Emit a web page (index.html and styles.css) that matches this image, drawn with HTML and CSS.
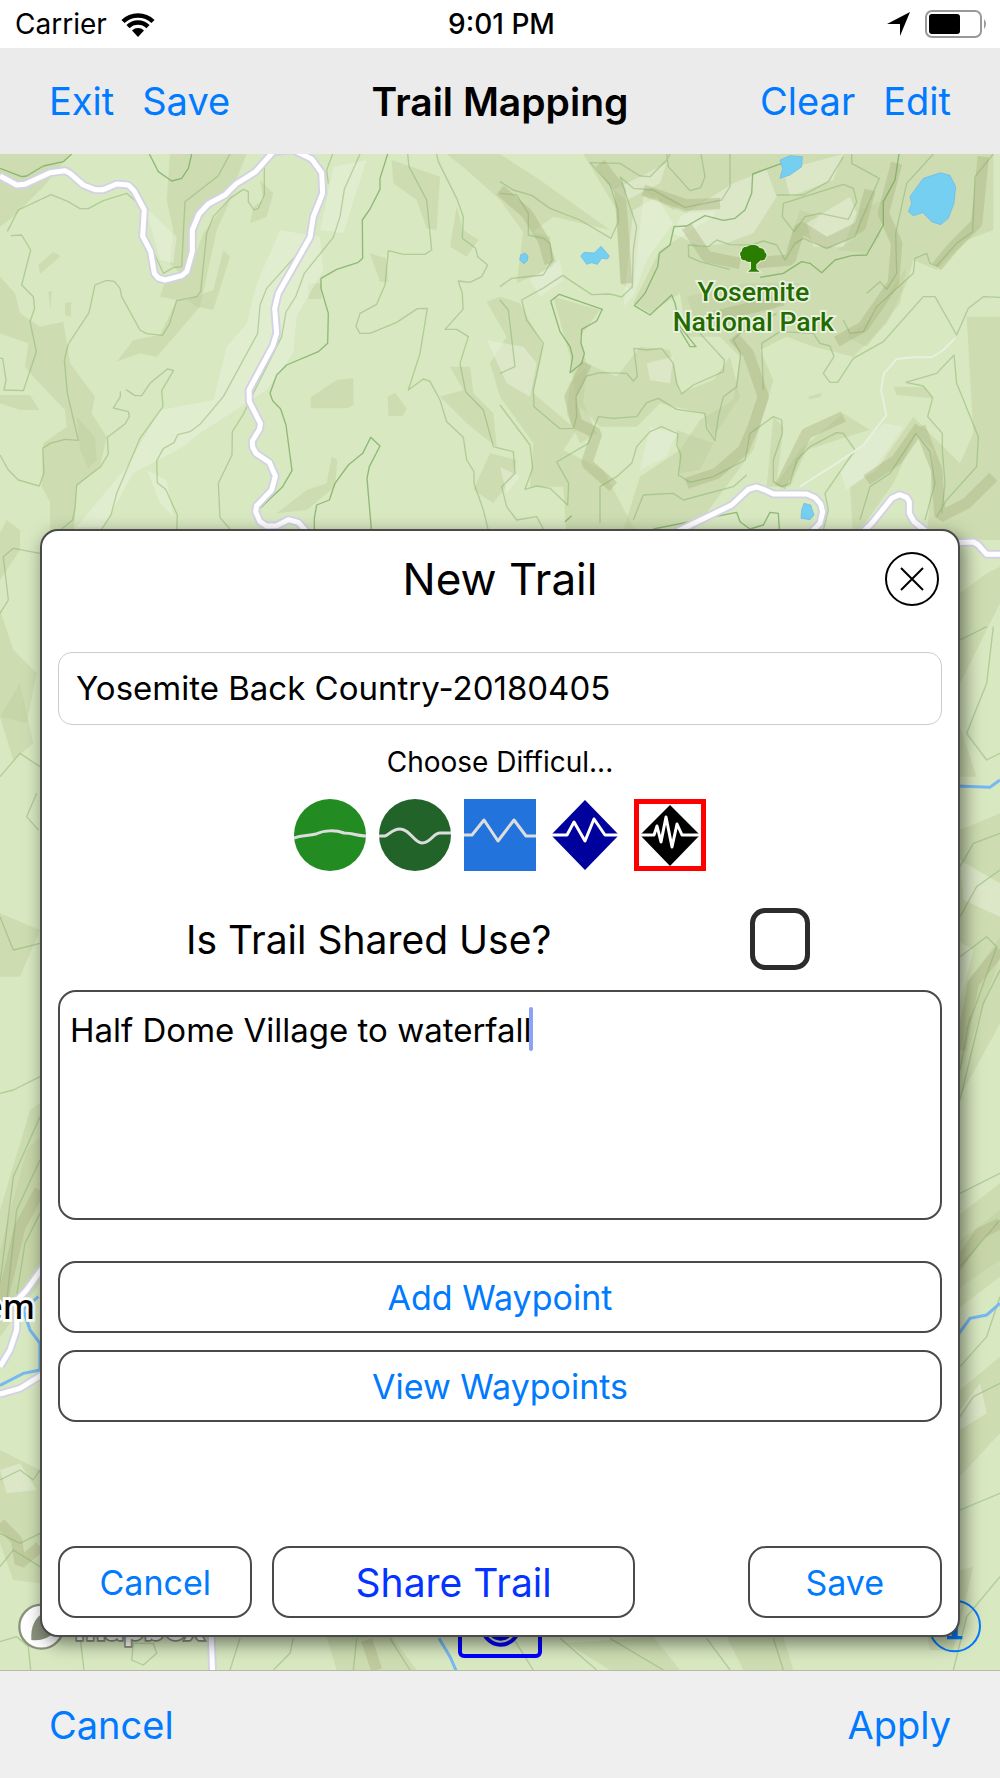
FILE: index.html
```html
<!DOCTYPE html>
<html lang="en">
<head>
    <meta charset="UTF-8">
    <meta name="viewport" content="width=device-width, initial-scale=1.0">
    <title>Trail Mapping</title>
    <link rel="stylesheet" href="styles.css">
</head>
<body>
    <div class="status-bar">
        <div class="status-left">
            <span>Carrier</span>
            <svg class="wifi-icon" viewBox="0 0 34 25">
                <path d="M2 9.500a21.500 21.500 0 0 1 30 0M7 14.700a14.300 14.300 0 0 1 20 0" fill="none" stroke="#000" stroke-width="4.500"/>
                <path d="M17 25l-6-6.500a8.500 8.500 0 0 1 12 0z"/>
            </svg>
        </div>
        <span class="status-time">9:01 PM</span>
        <div class="status-right">
            <svg class="location-icon" viewBox="0 0 24 24"><path d="M23 0L13 24V12H0z"/></svg>
            <svg class="battery-icon" viewBox="0 0 63 28">
                <rect x="1" y="1" width="55" height="26" rx="6" fill="#fff" stroke="#999" stroke-width="2"/>
                <rect x="4" y="4" width="31" height="20" rx="3"/>
                <path d="M59 9q4 5 0 10z" fill="#999"/>
            </svg>
        </div>
    </div>

    <header class="nav-bar">
        <div class="nav-group">
            <button type="button" class="bar-btn">Exit</button>
            <button type="button" class="bar-btn">Save</button>
        </div>
        <h1>Trail Mapping</h1>
        <div class="nav-group nav-right">
            <button type="button" class="bar-btn">Clear</button>
            <button type="button" class="bar-btn">Edit</button>
        </div>
    </header>

    <main class="map-stage">
        <svg class="map" viewBox="0 12 3000 4548" preserveAspectRatio="xMidYMin slice">
            <!-- hill shading, west -->
            <g class="shade">
                <path d="M0 12H210L130 110 40 200 0 230zM510 12H740L700 110 620 180 580 250 570 340 540 370 510 340 520 240 500 150zM700 130L650 240 620 380 600 470 540 540 470 620 420 610 350 635 400 570 480 555 530 450 480 440 500 380 570 360 610 250z"/>
                <path d="M0 380L45 430 60 490 120 530 190 515 210 640 285 740 275 790 320 860 300 950 230 1010 220 1170H150V1055L125 1010 130 880 200 830 195 780 100 680 75 650 85 580 0 550zM0 735L90 735 118 780 60 780 0 760zM115 345L160 305 182 318 120 372zM932 742L1010 690 1060 685V765L1040 775H932zM1163 740L1185 728 1220 775 1208 798H1165zM925 400H965V447H925zM1110 310L1158 325 1165 395 1140 395zM1175 30L1320 80 1310 240 1280 235 1250 150 1180 100z"/>
                <path d="M1370 170L1390 240 1435 270 1400 320 1350 290zM1350 650L1410 650 1420 730 1480 790 1490 890 1450 860 1400 820 1320 740 1390 720zM995 920L1012 930 1005 1010 920 1080 830 1090 920 1020 980 1000zM20 1110L60 1140 60 1200 0 1290V1150zM0 1380L40 1500 110 1570 80 1720 0 1700zM0 2290L120 2340 60 2480 0 2480zM780 90L820 130 800 200 750 220 760 170 790 150zM145 425L155 422 152 480zM195 460L214 455 212 500 195 495zM230 800L285 860 290 930 265 955 240 900zM560 450L640 420 670 300 690 320 640 480 590 470z"/>
            </g>
            <g class="light">
                <path d="M840 240L960 260 970 360 890 500 880 610 800 720 600 850 550 890 400 970 310 1130H230L380 950 480 780 640 750 680 590 740 520 770 400zM435 170L530 260 520 340 480 330zM1000 50L1100 30 1030 250 960 240zM440 960L500 990 520 1100 480 1060z"/>
            </g>

            <!-- hill shading, east -->
            <g transform="translate(1500 0)">
                <g class="shade">
                    <path d="M-160 12H0L120 90 330 240 160 200 80 260 0 150 -100 60zM250 12H700V180L560 190 430 140 400 420 360 400 350 180zM70 240L150 260 160 350 50 400zM700 12H1480V240L1400 270 1310 360 1240 330 1220 400 1160 520 1060 620 940 590 860 560 780 600 820 690 760 900 700 980 560 1170H360L420 980 540 900 600 810 700 750 720 620 660 560 560 560 540 430 450 490 400 460 480 300 640 200z"/>
                    <path d="M-40 455L0 440 60 460 130 590 100 730 230 840 190 900 310 960 420 1170H200L190 1010 90 1010 100 880 0 740 -30 640 20 560zM160 440L300 480 240 560 260 640 350 680 420 590 510 600 540 730 640 690 690 620 720 740 640 860 610 790 480 760 410 830 300 830 230 760 210 620zM530 840L640 880 600 960 540 970zM1400 500H1500V1170H1280L1300 900 1250 850 1180 1000 1060 1170 1050 1010 1130 960 1240 800 1380 940 1420 850zM1180 710L1270 712 1300 745 1190 735zM820 800L850 830 830 1000 900 900 1030 790 1110 840 1040 860 920 900 870 1010 800 1010zM-80 1020L-30 910 50 930 40 980 -20 1060zM925 740L967 728 960 742 928 748z"/>
                    <path d="M860 300L900 180 960 200 900 280zM1080 180L1150 150 1140 260 1100 310 1010 300 1070 260zM560 440L740 400 900 400 820 480 640 540 590 520zM400 100L470 120 540 160 520 180 440 130zM1040 560L1120 500 1180 410 1220 350 1200 460 1100 590zM210 700L260 650 250 760 290 850 240 880 200 790z"/>
                </g>
                <g class="light">
                    <path d="M540 200L700 100 800 60 830 140 760 250 680 280 600 290 520 250zM850 60L1030 12 1000 90 870 140zM920 220L1050 140 1070 190 1030 290 940 290zM90 390L180 330 190 390 120 440zM400 180L470 140 520 220 440 330 400 440 370 470zM-40 570L70 590 110 640 90 740 20 700zM0 950L60 980 20 1030zM340 120L460 60 500 40 480 100 380 150z"/>
                    <path d="M450 830L530 850 500 920 420 960zM1150 820L1210 830 1120 960 1040 1020 1020 960zM440 640L520 620 510 700 450 690z"/>
                </g>
                <g class="ridge">
                    <path d="M1190 40L1150 190 1190 280 1180 400 1090 530 1010 575M1450 20L1430 220 1360 290 1310 350M1110 120L1080 230 980 280 900 230 870 330 750 340M700 560L745 610 790 740 760 830 730 900 650 970 560 1000"/>
                    <path d="M260 640L210 740 230 820 290 850 260 940 340 1010M1030 800L920 850 880 930 840 1010M1260 830L1190 930 1100 990M1260 830L1310 960 1320 1100 1400 1060 1480 980M300 40L360 120 380 400M430 120L560 165 660 160M850 450L640 500M560 230L620 320 720 340M0 120L80 190 130 270 150 340"/>
                </g>
            </g>

            <!-- hill shading, beside the lower half of the map -->
            <g class="shade">
                <path d="M0 3180L90 2880 120 2860V3400L0 3560zM0 3900L120 3960V4300L40 4290 0 4180zM2880 1330L2960 1270 3000 1250V1360L2930 1500 2870 1620zM2870 1700L2930 1880H2870zM2880 2040L3000 1990V2420L2870 2800zM2870 3200L3000 3100V3380L2870 3480zM2880 3720L3000 3620V3850L2870 3990zM0 1700L60 1600 100 1780 40 1830z"/>
                <path d="M0 3300L80 3000 120 2960V3340L0 3520zM2870 2760L2900 2500 3000 2360V2620L2870 2860zM2870 3280L3000 3180V3330L2870 3420z"/>
                <path d="M980 4460L1160 4440 1250 4560H1010zM1700 4480L1960 4460 2040 4560H1830zM2180 4460H2350L2380 4560H2230zM2750 4300L2920 4250 2860 4500H2790z"/>
            </g>
            <g class="ridge">
                <path d="M0 3480L60 3230 120 3120M0 4120L50 4170 60 4240 120 4190M2880 2700L2920 2500 3000 2400M2870 3350L2940 3250 3000 3220M1100 4470L1130 4560"/>
            </g>
            <g class="light">
                <path d="M2880 2130L3000 2200V2300L2890 2250zM2870 2370L2920 2400 2880 2560zM2880 3780L2940 3700 2960 3790 2880 3840zM0 3960L60 3940 110 4020 20 4030z"/>
            </g>

            <!-- contour lines -->
            <g class="contour">
                <path d="M22 244L55 180 153 134 205 155 240 176 265 176 310 152 380 130 420 165M33 257L65 255 92 300 65 405 100 440 104 475 90 515 109 605 70 722 12 720 18 690 8 625H0M0 915L25 960 55 990 118 1008 132 968 128 895 150 880 195 868 235 871 202 730 193 630 205 582 267 488 285 405 320 391 343 394 360 415 365 440 420 540 440 551 487 556 508 523 530 452 590 440 602 425 620 250 640 200 690 145 730 118 745 125 745 155 762 180 775 175 793 135V50M378 719L405 737 425 737 450 700 502 657 521 661 485 722 489 770 420 865 350 1030 333 1095 303 1140M361 724V740L340 774 385 785 388 800 375 822 322 862 325 912 302 950 230 1005 225 1075 218 1110 185 1137M690 12L655 77 555 155 545 350 520 353 490 370 430 240"/>
                <path d="M885 320L800 415 780 465 773 550 670 740 600 823 570 845 533 854 522 878 490 896 470 932 472 998 497 1018 532 1095 530 1140M1080 12L1033 118 1020 200 1000 262 913 370 888 438 858 486 845 560 760 730 730 793 697 845 696 915 655 1000 660 1103 690 1137M1223 12L1227 50 1280 150 1295 300 1275 313H1210L1165 302 1155 405 1130 463 1080 490 1068 530 1080 550H1110L1190 517 1252 476 1282 475 1260 610 1225 720 1270 687 1290 694 1320 750 1340 815 1390 862 1400 930 1422 965V1000L1450 1080 1464 1137M1310 12L1315 35 1370 145 1390 200 1387 265 1427 295 1433 320 1463 345 1445 380 1410 397 1375 393 1387 430 1389 478 1335 538H1370L1405 560 1380 640 1397 725 1450 780 1480 890 1500 895M998 12L980 60 985 100"/>
            </g>
            <g class="contour" transform="translate(1500 0)">
                <path d="M0 95L40 120 95 136 150 175 240 210 333 265 355 215 354 180 330 105 270 38 360 40 420 78 450 80 500 30 510 12M360 80L410 230 400 300 397 410 365 441 330 432 275 434 188 376 132 413 65 450 80 510 130 580 100 720 102 770 180 836 220 835 230 800 228 740 260 678 300 668 380 670 400 693 412 680 402 595 440 600 485 595 520 640 530 700 545 732 580 705 670 665 673 630 600 550M360 80L400 115 460 120 500 143 555 172 665 150 690 110 690 12M0 130L50 135 85 190V255L130 265 150 280 157 330 130 375 35 385 0 410M500 12L505 50 570 122 602 113 615 80 603 12M170 936L265 880 295 800 340 805 410 800 440 758 475 745 530 778 615 790 620 835 645 872 655 800 670 740 710 710 722 610 700 570 720 550 830 490"/>
                <path d="M0 765L90 885 98 955 75 1018 110 1008 150 1015 203 1065 206 1000 170 936M300 1120V1010L350 980 396 938 410 890 450 845 485 830 534 852 530 885 543 915 535 975 570 997 640 980 735 930 750 850 820 800 845 810 847 850 820 930 820 995 845 1010 870 1000 890 930 930 890 1010 848 1030 850 1065 900 975 1030 985 1080 970 1140M790 720L785 580 840 545 940 550 960 580 990 588 1002 620 970 670 990 697H1013L1060 625 1150 575 1270 440H1305L1370 555 1405 475 1450 440 1500 442M830 135H910L985 95 1030 20M1055 12V40L1138 85 1080 220 1065 260 980 295 910 265 885 280 855 330 830 285 790 273 755 285 690 284 650 270 625 290 565 285 566 320 600 335 690 358M850 160L1030 103 1060 115 1070 155 1045 208 960 190 915 200 882 245 847 200zM1480 12L1425 80 1418 245 1370 280 1310 348 1290 340 1280 310 1245 325 1240 370 1130 470 1090 545 1050 550 1030 510M1300 12L1220 100 1187 250 1190 370 1160 418 1140 395 1100 430"/>
                <path d="M1217 697L1310 670 1362 615 1370 700 1435 860 1430 950 1340 1050 1310 1100M1217 697L1270 708 1298 743 1283 800 1327 850V900L1335 1000 1325 1090M1080 1110L1110 1010 1170 970 1248 850 1290 905 1305 1000 1275 1110M400 1110L430 1035 520 1030 550 1050 700 1010 740 975M0 895L40 905 45 970 5 1010 20 1070 50 1110 110 1100 130 1137M0 450L25 480 45 650 0 670"/>
            </g>
            <g class="contour">
                <path d="M0 1390L25 1350 10 1220 40 1195 120 1210M0 1880L60 1810 120 1850M0 2300L40 2400 120 2380M110 1930L80 2000 115 2040M0 2830L40 2820 120 2780M0 3400L40 3080 120 2900M15 3500L50 3180 120 3030M40 3500L75 3280 120 3190M0 3990L60 3960 100 3990 120 3960M0 4150L60 4180 120 4150M0 4250L40 4200 120 4250M2880 1470L2960 1430M2980 1430L2960 1600 2900 1750 2960 1830 3000 1810M2880 2150L2920 2080 3000 2050M2880 2300L2930 2210 3000 2160M2880 2420L2960 2360 2990 2390 2900 2640M2880 2850L2950 2560 3000 2460M2880 2760L2910 2600M2880 3130L3000 3070M2880 3350L3000 3210M2880 3650L2960 3560 3000 3440M2880 3800L2920 3740 3000 3700M2880 4080L3000 4030M2860 4560L2900 4400 3000 4280"/>
                <path d="M0 4475L50 4460 85 4490 92 4560M240 4460L252 4560M400 4480L460 4480 470 4510 430 4545 395 4530zM720 4465L690 4560M880 4465L870 4510 820 4560M1070 4465L1060 4560M1170 4465L1230 4560M1540 4465L1600 4560M1680 4465L1790 4560M1830 4465L1990 4560M2120 4465L2190 4560M2320 4465L2350 4560"/>
            </g>
            <g class="contour strong">
                <path d="M0 55L65 80 80 78 130 48 190 35 215 12M448 12L475 65 515 93 545 85 565 55 575 12M1163 12L1140 85V118L1110 177 1087 210 1088 325 1075 337 1010 358 963 385V415L985 490 983 580 955 605 860 645 830 675 810 730 818 752 842 777 858 825 876 962 848 1010 780 1075M943 1137V1105L950 1065 988 1050 1005 1000 1045 945 1088 910 1112 862 1140 888 1108 950 1101 985 1114 1137"/>
            </g>
            <g class="contour strong" transform="translate(1500 0)">
                <path d="M1197 12L1185 90 1150 155V225L1100 315 1055 317 1005 330 965 368 930 340 905 335 850 370 780 382M845 40L758 72 755 130 735 180 705 205 670 211 615 197 560 228 522 230 510 285 478 310 473 350 435 430 403 467 450 495 515 435 525 460 540 530 588 590 570 590 540 540M210 668L218 620 210 590 180 545 152 453 178 433 307 478 290 513 245 538 243 580 253 610 245 640zM460 1137L710 1087 720 1115 750 1137 790 1125 810 1087 835 1090 838 1137M195 1115L215 1097"/>
            </g>

            <!-- water -->
            <g class="lake" transform="translate(1500 0)">
                <path d="M1270 85L1322 68 1350 76 1367 110 1362 160 1345 205 1322 224 1295 215 1268 188 1240 197 1225 185 1235 160 1230 140zM840 30L870 17 907 20 905 50 870 75 840 85 848 55zM242 318L252 307 283 309 303 289 328 318 322 327 305 325 292 343 275 338 260 343zM62 315L75 309 84 317 82 332 72 341 59 330zM912 1060L932 1065 942 1095 930 1109 903 1105 905 1080z"/>
            </g>
            <path class="river" d="M2870 1908L2970 1912 3000 1890M2870 3560L2910 3505 2960 3495 3000 3460M0 3706L70 3670 120 3660V3580L90 3540 70 3480 115 3440M1317 4465L1350 4520 1372 4570"/>

            <!-- roads -->
            <path class="trail" d="M2865 565L2830 600 2795 622H2740L2690 627 2652 670 2643 720 2659 795 2590 885 2510 940 2470 965 2400 1010"/>
            <g class="road-edge">
                <path id="roads" d="M0 78L50 105 75 103 150 68 195 62 210 70 250 105 285 119 310 119 350 102 385 105 402 122 433 180 428 258 452 305 463 370 475 384 495 390 545 377 560 365 577 305V240L597 192 625 162 675 135 708 102 767 65 820 5 880 0 935 27 965 68 968 130 940 200 930 262 835 430 824 475 830 550 818 588 747 720 748 755 781 820 779 837 757 873 758 892 768 910 808 937 826 978 815 1020 770 1067 767 1085 780 1115 800 1128 830 1127 865 1109 895 1117 920 1145M2030 1145L2195 1065 2245 1018 2270 1011 2290 1018 2320 1032H2420L2445 1043 2462 1062 2468 1085 2460 1120 2435 1145M2590 1145L2615 1120 2675 1045 2698 1034 2720 1042 2728 1055V1090L2742 1115 2780 1145M2870 1178L2920 1176 2935 1185 2960 1213H3000M0 3732L60 3715 125 3675M0 3650L30 3600 50 3540 52 3450 80 3420 130 3350M633 4440L638 4570"/>
            </g>
            <use href="#roads" class="road-fill"/>

            <!-- labels and controls -->
            <g transform="translate(2220 285)" fill="#2b7d00" stroke="#edf3e2" stroke-width="5" paint-order="stroke">
                <path d="M41 0c10 0 16 5 18 9 10 0 16 6 15 13 7 4 7 12 2 17 0 6-8 9-14 7l-13 12v14l10 8H24l9-8V50c-8 2-14 0-17-4-8 1-15-5-13-12-5-6-3-13 3-16-1-8 6-14 15-13 5-4 12-5 20-5z"/>
            </g>
            <text class="park-name" x="2260" y="452">Yosemite</text>
            <text class="park-name" x="2260" y="543">National Park</text>
            <text class="town-name" x="105" y="3507">em</text>

            <circle cx="124" cy="4430" r="66" fill="#fff" stroke="#8a917c" stroke-width="7"/>
            <path d="M94 4470q-4-60 40-84 40 20 30 60-30 30-70 24z" fill="#88907a"/>
            <text class="brand-name" x="225" y="4470">mapbox</text>
            <rect x="1380" y="4290" width="240" height="228" rx="12" class="locate"/>
            <circle cx="1502" cy="4430" r="54" class="locate"/>
            <circle cx="1502" cy="4430" r="36" class="locate"/>
            <circle cx="2864" cy="4428" r="76" fill="none" stroke="#007aff" stroke-width="6"/>
            <path d="M2845 4410h28v48h14v10h-46v-10h14v-38h-10z" fill="#007aff"/>
        </svg>

        <form class="trail-card">
            <div class="card-header">
                <h2>New Trail</h2>
                <button type="button" class="close-btn" aria-label="Close">
                    <svg viewBox="0 0 54 54" fill="none" stroke="#000" stroke-width="2">
                        <circle cx="27" cy="27" r="26"/>
                        <path d="M16 16l22 22M38 16L16 38"/>
                    </svg>
                </button>
            </div>

            <input type="text" class="trail-name" aria-label="Trail name" value="Yosemite Back Country-20180405">

            <fieldset class="difficulty">
                <legend>Choose Difficul...</legend>
                <div class="difficulty-list">
                    <label>
                        <input type="radio" name="difficulty" value="1" aria-label="Easiest">
                        <svg viewBox="0 0 72 72">
                            <circle cx="36" cy="36" r="36" fill="#228b22"/>
                            <path d="M0 39C7 36 14 37 22 35c8-4 20-4 28-1 8 0 14 3 22 3" stroke="#ddd"/>
                        </svg>
                    </label>
                    <label>
                        <input type="radio" name="difficulty" value="2" aria-label="Easy">
                        <svg viewBox="0 0 72 72">
                            <circle cx="36" cy="36" r="36" fill="#226329"/>
                            <path d="M0 37h6c4-1 7-7 15-7 10 0 14 14 22 14 9 0 11-10 18-10h11" stroke="#ddd"/>
                        </svg>
                    </label>
                    <label>
                        <input type="radio" name="difficulty" value="3" aria-label="Intermediate">
                        <svg viewBox="0 0 72 72">
                            <path d="M0 0h72v72H0z" fill="#2274dc" stroke="none"/>
                            <path d="M0 36h8l12-15 14 21 16-21 12 16h10" stroke="#ddd"/>
                        </svg>
                    </label>
                    <label>
                        <input type="radio" name="difficulty" value="4" aria-label="Hard">
                        <svg viewBox="0 0 72 72">
                            <path d="M36 1l34 35-34 35L2 36z" fill="#00009c" stroke="none"/>
                            <path d="M2 36h16l7-13 11 19 9-22 11 16h14" stroke="#fff"/>
                        </svg>
                    </label>
                    <label>
                        <input type="radio" name="difficulty" value="5" aria-label="Extreme" checked>
                        <svg viewBox="0 0 72 72">
                            <path d="M36 6l30 30-30 31L6 36z" fill="#000" stroke="none"/>
                            <path d="M6 36h14l3-9 4 16 5-25 6 30 5-23 5 11h18" stroke="#fff"/>
                        </svg>
                    </label>
                </div>
            </fieldset>

            <div class="shared-row">
                <label for="sharedUse">Is Trail Shared Use?</label>
                <input type="checkbox" id="sharedUse">
            </div>

            <div class="notes-box">
                <textarea class="notes" aria-label="Trail description">Half Dome Village to waterfall</textarea>
                <span class="text-cursor"></span>
            </div>

            <div class="waypoint-actions">
                <button type="button" class="card-btn">Add Waypoint</button>
                <button type="button" class="card-btn">View Waypoints</button>
            </div>

            <div class="card-actions">
                <button type="button" class="card-btn small">Cancel</button>
                <button type="button" class="card-btn share">Share Trail</button>
                <button type="submit" class="card-btn small save">Save</button>
            </div>
        </form>
    </main>

    <footer class="tool-bar">
        <button type="button" class="bar-btn">Cancel</button>
        <button type="button" class="bar-btn">Apply</button>
    </footer>
</body>
</html>
```
FILE: styles.css
```css
:root {
    --tint: #007aff;
    --line: #4a4a4a;
}

* {
    box-sizing: border-box;
    margin: 0;
    padding: 0;
}

body {
    font-family: Inter, 'Liberation Sans', sans-serif;
    color: #000;
    background: #fff;
    min-height: 100vh;
    display: flex;
    flex-direction: column;
}

button {
    font-family: inherit;
    background: none;
    border: none;
    cursor: pointer;
}

svg {
    display: block;
}

/* status bar */
.status-bar {
    display: grid;
    grid-template-columns: 1fr auto 1fr;
    align-items: center;
    height: 48px;
    padding: 0 12px 0 15px;
    font-size: 28px;
}

.status-left,
.status-right {
    display: flex;
    align-items: center;
    gap: 14px;
}

.status-right {
    justify-content: flex-end;
}

.status-time {
    font-weight: 500;
}

.wifi-icon {
    width: 34px;
    height: 25px;
}

.location-icon {
    width: 24px;
    height: 24px;
}

.battery-icon {
    width: 63px;
    height: 28px;
}

/* navigation bar */
.nav-bar {
    display: grid;
    grid-template-columns: 1fr auto 1fr;
    align-items: center;
    height: 106px;
    padding: 0 49px;
    background: #ebebeb;
}

.nav-bar h1 {
    font-size: 39px;
    font-weight: 600;
}

.nav-group {
    display: flex;
    gap: 28px;
}

.nav-right {
    justify-content: flex-end;
}

.bar-btn {
    color: var(--tint);
    font-size: 38px;
}

/* map */
.map-stage {
    position: relative;
    flex: 1;
    padding: 375px 40px 33px;
    background: #d8e8c0;
    overflow: hidden;
}

.map {
    position: absolute;
    top: 0;
    left: 0;
    width: 100%;
    height: 100%;
}

.shade {
    fill: #bfcc9c;
    fill-opacity: 0.4;
}

.light {
    fill: #e9f1de;
    opacity: 0.5;
}

.ridge {
    fill: none;
    stroke: #a9b27f;
    stroke-width: 34;
    stroke-linejoin: bevel;
    opacity: 0.4;
}

.contour {
    fill: none;
    stroke: #7fae66;
    stroke-width: 4;
    stroke-linejoin: round;
    opacity: 0.45;
}

.contour.strong {
    stroke: #68a050;
    opacity: 0.65;
}

.lake {
    fill: #75cff0;
    stroke: #6db4ec;
    stroke-width: 2;
}

.river {
    fill: none;
    stroke: #75b8f2;
    stroke-width: 9;
}

.trail {
    fill: none;
    stroke: #e8f0df;
    stroke-width: 6;
}

.road-edge,
.road-fill {
    fill: none;
    stroke: #d2d2e4;
    stroke-width: 26;
    stroke-linejoin: round;
}

.road-fill {
    stroke: #fff;
    stroke-width: 15;
}

.park-name {
    font-family: Roboto, sans-serif;
    font-size: 80px;
    font-weight: 500;
    text-anchor: middle;
    fill: #226b00;
    stroke: #edf3e2;
    stroke-width: 10;
    paint-order: stroke;
}

.town-name {
    font-family: 'Noto Sans', sans-serif;
    font-size: 102px;
    font-weight: 500;
    text-anchor: end;
    stroke: #fff;
    stroke-width: 16;
    paint-order: stroke;
}

.brand-name {
    font-family: Lato, sans-serif;
    font-size: 108px;
    font-weight: 900;
    fill: #fff;
    stroke: #8a917c;
    stroke-width: 10;
    paint-order: stroke;
}

.locate {
    fill: none;
    stroke: #0000ff;
    stroke-width: 12;
}

/* new trail card */
.trail-card {
    position: relative;
    padding: 0 16px 17px;
    background: #fff;
    border: 2px solid var(--line);
    border-radius: 18px;
    box-shadow: 4px 6px 18px rgba(0, 0, 0, 0.5);
}

.card-header {
    display: grid;
    grid-template-columns: 54px 1fr 54px;
    align-items: center;
    height: 96px;
    margin-bottom: 25px;
    padding: 0 3px;
}

.card-header h2 {
    grid-column: 2;
    font-size: 44px;
    font-weight: 400;
    text-align: center;
}

.close-btn,
.close-btn svg {
    width: 54px;
    height: 54px;
}

.trail-name {
    display: block;
    width: 100%;
    height: 73px;
    padding: 0 17px 2px;
    border: 1px solid #ccc;
    border-radius: 14px;
    font: 400 33px Inter, sans-serif;
    color: #000;
    outline: none;
}

.difficulty {
    margin-top: 19px;
    border: none;
}

.difficulty legend {
    width: 100%;
    margin-bottom: 19px;
    font-size: 28px;
    line-height: 36px;
    text-align: center;
}

.difficulty-list {
    display: flex;
    justify-content: center;
    gap: 13px;
}

.difficulty-list input {
    position: absolute;
    appearance: none;
}

.difficulty-list svg {
    width: 72px;
    height: 72px;
    fill: none;
    stroke-width: 3;
    stroke-linejoin: round;
}

.difficulty-list input:checked + svg {
    outline: 5px solid #ff0000;
    outline-offset: -5px;
}

.shared-row {
    display: flex;
    align-items: center;
    justify-content: space-between;
    margin-top: 37px;
    padding: 0 132px 0 128px;
    font-size: 39px;
}

.shared-row input {
    appearance: none;
    width: 60px;
    height: 62px;
    border: 5px solid #2c2c2c;
    border-radius: 15px;
}

.notes-box {
    position: relative;
    margin: 20px 0 41px;
}

.notes {
    display: block;
    width: 100%;
    height: 230px;
    padding: 17px 10px;
    border: 2px solid var(--line);
    border-radius: 18px;
    font: 400 33px/42px Inter, sans-serif;
    color: #000;
    resize: none;
    outline: none;
}

.text-cursor {
    position: absolute;
    top: 17px;
    left: 471px;
    width: 4px;
    height: 44px;
    border-radius: 2px;
    background: #8ca2f5;
}

.waypoint-actions {
    display: flex;
    flex-direction: column;
    gap: 17px;
    margin-bottom: 124px;
}

.card-btn {
    height: 72px;
    border: 2px solid var(--line);
    border-radius: 18px;
    color: var(--tint);
    font-size: 34px;
}

.card-actions {
    display: flex;
    gap: 20px;
}

.card-btn.small {
    width: 22%;
}

.card-btn.share {
    width: 41%;
    color: #0433ff;
    font-size: 39px;
}

.card-btn.save {
    margin-left: auto;
}

/* bottom toolbar */
.tool-bar {
    display: flex;
    align-items: center;
    justify-content: space-between;
    height: 108px;
    padding: 0 49px;
    background: #efefef;
    border-top: 1px solid #b5b8ae;
}
```
